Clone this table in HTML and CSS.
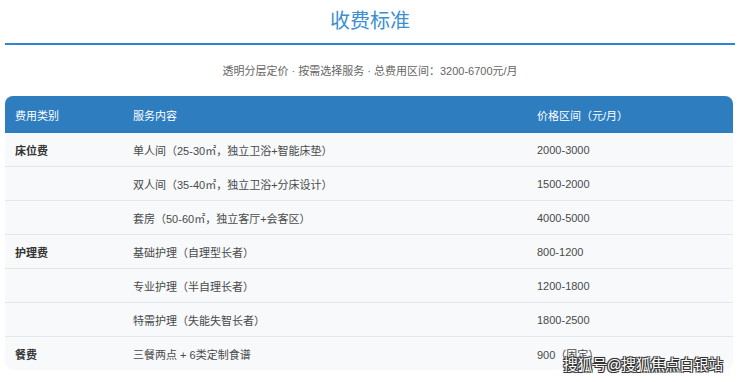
FILE: index.html
```html
<!DOCTYPE html>
<html lang="zh-CN">
<head>
<meta charset="utf-8">
<title>收费标准</title>
<link rel="stylesheet" href="styles.css">
</head>
<body>
<div class="page">
  <h1 class="title">收费标准</h1>
  <p class="subtitle">透明分层定价 · 按需选择服务 · 总费用区间：3200-6700元/月</p>
  <div class="table-card">
    <table class="fee-table">
      <colgroup>
        <col class="c-cat">
        <col class="c-svc">
        <col class="c-price">
      </colgroup>
      <thead>
        <tr><th>费用类别</th><th>服务内容</th><th>价格区间（元/月）</th></tr>
      </thead>
      <tbody>
        <tr><td class="cat">床位费</td><td>单人间（25-30㎡，独立卫浴+智能床垫）</td><td>2000-3000</td></tr>
        <tr><td class="cat"></td><td>双人间（35-40㎡，独立卫浴+分床设计）</td><td>1500-2000</td></tr>
        <tr><td class="cat"></td><td>套房（50-60㎡，独立客厅+会客区）</td><td>4000-5000</td></tr>
        <tr><td class="cat">护理费</td><td>基础护理（自理型长者）</td><td>800-1200</td></tr>
        <tr><td class="cat"></td><td>专业护理（半自理长者）</td><td>1200-1800</td></tr>
        <tr><td class="cat"></td><td>特需护理（失能失智长者）</td><td>1800-2500</td></tr>
        <tr><td class="cat">餐费</td><td>三餐两点 + 6类定制食谱</td><td>900（固定）</td></tr>
      </tbody>
    </table>
  </div>
  <div class="watermark">搜狐号@搜狐焦点白银站</div>
</div>
</body>
</html>
```

FILE: styles.css
```css
html, body {
  margin: 0;
  padding: 0;
  background: #ffffff;
}
body {
  font-family: "Liberation Sans", "Noto Sans CJK SC", sans-serif;
  color: #444;
}
.page {
  position: relative;
  width: 730px;
  height: 382px;
  padding: 0 5px;
  overflow: hidden;
}
.title {
  margin: 0;
  height: 43px;
  line-height: 43px;
  text-align: center;
  font-size: 20px;
  font-weight: normal;
  color: #3b8fd2;
  border-bottom: 2px solid #2d86d3;
}
.subtitle {
  margin: 16px 0 15px;
  line-height: 20px;
  text-align: center;
  font-size: 11px;
  color: #666;
}
.table-card {
  width: 728px;
  border-radius: 8px;
  overflow: hidden;
  background: #f7f9fb;
}
.fee-table {
  width: 100%;
  border-collapse: collapse;
  table-layout: fixed;
  font-size: 11px;
}
.c-cat { width: 118px; }
.c-svc { width: 404px; }
.c-price { width: auto; }
.fee-table th {
  height: 37px;
  padding: 0 10px;
  text-align: left;
  font-weight: normal;
  color: #ffffff;
  background: #2d7dbf;
}
.fee-table td {
  height: 33px;
  padding: 0 10px;
  color: #4a4a4a;
  border-bottom: 1px solid #e3e6ea;
}
.fee-table tbody tr:last-child td {
  border-bottom: none;
}
.fee-table td.cat {
  font-weight: bold;
  color: #333;
}
.watermark {
  position: absolute;
  right: 17px;
  bottom: 8px;
  font-size: 14.5px;
  color: #ffffff;
  text-shadow: 1px 1px 0 #333, -1px -1px 0 #333, 1px -1px 0 #333, -1px 1px 0 #333, 0 0 2px #000;
}
```
